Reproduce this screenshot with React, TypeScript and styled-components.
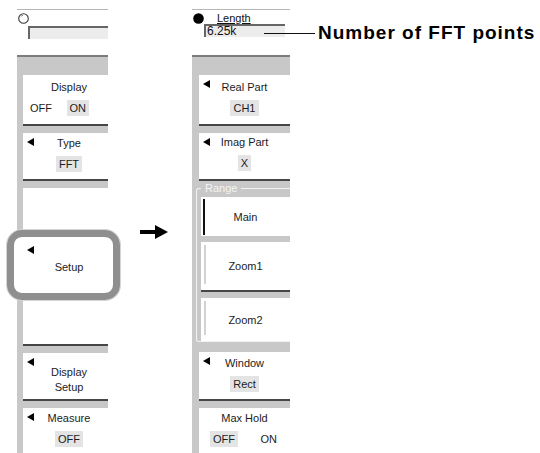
import React from "react";
import styled, { createGlobalStyle } from "styled-components";

const Global = createGlobalStyle`
  html, body { margin: 0; padding: 0; background: #fff; overflow: hidden; }
  body { font-family: "Liberation Sans", Arial, sans-serif; }
`;

const Page = styled.div`
  display: flex;
  align-items: flex-start;
  height: 453px;
  box-sizing: border-box;
  padding: 9px 0 0 17px;
  overflow: hidden;
`;

const Panel = styled.div<{ $w: number; $ml?: number }>`
  width: ${(p) => p.$w}px;
  margin-left: ${(p) => p.$ml ?? 0}px;
  display: flex;
  flex-direction: column;
  height: 448px;
`;

const Head = styled.div`
  position: relative;
  height: 46px;
  flex: none;
  box-sizing: border-box;
  border-top: 1px solid #b6b6b6;
  background: #fff;
  padding: 2px 0 0 1px;
`;

const HeadRow = styled.div`
  display: flex;
  align-items: center;
  height: 12px;
`;

const HeadLabel = styled.span`
  margin-left: 13px;
  font-size: 11px;
  line-height: 11px;
  color: #111;
  text-decoration: underline;
`;

const ValueBox = styled.div<{ $ml: number; $mt: number; $w: number }>`
  margin: ${(p) => p.$mt}px 0 0 ${(p) => p.$ml}px;
  width: ${(p) => p.$w}px;
  height: 13px;
  box-sizing: border-box;
  background: #ececec;
  border-top: 2px solid #666;
  border-left: 2px solid #666;
  font-size: 12px;
  line-height: 11px;
  padding-left: 1px;
  color: #111;
`;

const Band = styled.div`
  height: 20px;
  flex: none;
  box-sizing: border-box;
  border-top: 2px solid #7c7c7c;
  background: #c8c8c8;
`;

const KeyStack = styled.div<{ $strip: number }>`
  flex: 1;
  background: #c8c8c8;
  padding-left: ${(p) => p.$strip}px;
  display: flex;
  flex-direction: column;
  gap: 7px;
`;

const Key = styled.div<{ $h: number; $pt?: number; $pl?: number; $extend?: number }>`
  position: relative;
  height: ${(p) => p.$h}px;
  flex: none;
  box-sizing: border-box;
  background: #fff;
  border-bottom: 2px solid #464646;
  margin-left: ${(p) => -(p.$extend ?? 0)}px;
  padding: ${(p) => p.$pt ?? 4}px 0 0 ${(p) => (p.$pl ?? 0) + (p.$extend ?? 0)}px;
  display: flex;
  flex-direction: column;
  align-items: center;
  font-size: 11px;
  color: #1c1c1c;
`;

const Marker = styled.span<{ $left?: number }>`
  position: absolute;
  left: ${(p) => p.$left ?? 4}px;
  top: 5px;
  width: 0;
  height: 0;
  border-top: 4px solid transparent;
  border-bottom: 4px solid transparent;
  border-right: 7px solid #000;
`;

const Label = styled.span<{ $lh?: number }>`
  line-height: ${(p) => p.$lh ?? 14}px;
  text-align: center;
  white-space: nowrap;
`;

const Value = styled.span`
  margin-top: 6px;
  line-height: 16px;
  padding: 0 3px;
  background: #e4e4e4;
`;

const Toggle = styled.div<{ $m: string }>`
  align-self: stretch;
  display: flex;
  justify-content: space-between;
  margin: ${(p) => p.$m};
`;

const Option = styled.span<{ $on?: boolean }>`
  line-height: 16px;
  padding: 0 3px;
  background: ${(p) => (p.$on ? "#e4e4e4" : "transparent")};
`;

const Ring = styled.div`
  position: absolute;
  top: -11px;
  bottom: -11px;
  left: -10px;
  right: -12px;
  border: 7px solid #8f8f8f;
  border-radius: 15px;
  box-shadow: inset 0 0 0 4px #fff, 0 0 0 1px #d4d4d4;
  z-index: 2;
  pointer-events: none;
`;

const RangeSet = styled.fieldset`
  margin: -6px 0 3px -3px;
  padding: 3px 0 0 4px;
  border: 1px solid #f2f2f2;
  border-right: none;
  border-radius: 3px 0 0 3px;
  min-width: 0;
`;

const RangeLegend = styled.legend`
  font-size: 11px;
  line-height: 12px;
  color: #f4f4f4;
  padding: 0 4px;
`;

const RangeList = styled.div`
  display: flex;
  flex-direction: column;
  gap: 6px;
`;

const RangeKey = styled.div<{ $h: number; $sel?: boolean; $line?: boolean }>`
  position: relative;
  height: ${(p) => p.$h}px;
  box-sizing: border-box;
  background: #fff;
  border-bottom: ${(p) => (p.$line ? "2px solid #464646" : "none")};
  display: flex;
  align-items: center;
  justify-content: center;
  font-size: 11px;
  color: #1c1c1c;
  &::before {
    content: "";
    position: absolute;
    left: ${(p) => (p.$sel ? 2 : 3)}px;
    top: ${(p) => (p.$sel ? 2 : 3)}px;
    bottom: ${(p) => (p.$sel ? 1 : 6)}px;
    width: 2px;
    background: ${(p) => (p.$sel ? "#111" : "#d2d2d2")};
  }
`;

const ArrowBox = styled.svg`
  flex: none;
  margin: 216px 0 0 32px;
`;

const Callout = styled.div`
  position: absolute;
  left: 72px;
  top: 12px;
  height: 22px;
  display: flex;
  align-items: center;
`;

const Leader = styled.span`
  width: 51px;
  height: 1px;
  background: #111;
`;

const CalloutText = styled.span`
  margin-left: 3px;
  font-family: "Liberation Sans", Arial, sans-serif;
  font-weight: bold;
  font-size: 19px;
  letter-spacing: 1px;
  line-height: 22px;
  color: #000;
  white-space: nowrap;
`;

const Knob = ({ filled }: { filled?: boolean }) => (
  <svg width="11" height="11" viewBox="0 0 11 11">
    {filled ? (
      <circle cx="5.5" cy="5.5" r="5.3" fill="#000" />
    ) : (
      <>
        <circle cx="5.5" cy="5.5" r="4.8" fill="#fff" stroke="#3a3a3a" strokeWidth="1.1" />
        <path d="M2.8 3.6 A3.2 3.2 0 0 1 5 2.3" stroke="#777" strokeWidth="0.9" fill="none" />
      </>
    )}
  </svg>
);

export default function App() {
  return (
    <>
      <Global />
      <Page>
        <Panel $w={91}>
          <Head>
            <HeadRow>
              <Knob />
            </HeadRow>
            <ValueBox $ml={10} $mt={2} $w={80} />
          </Head>
          <Band />
          <KeyStack $strip={6}>
            <Key $h={51} $pt={5} $pl={7}>
              <Label>Display</Label>
              <Toggle $m="6px 19px 0 -3px">
                <Option>OFF</Option>
                <Option $on>ON</Option>
              </Toggle>
            </Key>
            <Key $h={48} $pt={3} $pl={7}>
              <Marker />
              <Label>Type</Label>
              <Value>FFT</Value>
            </Key>
            <Key $h={46} $pl={7} />
            <Key $h={50} $pt={19} $pl={7} $extend={6}>
              <Marker $left={10} />
              <Label>Setup</Label>
              <Ring />
            </Key>
            <Key $h={48} $pl={7} />
            <Key $h={48} $pt={12} $pl={7}>
              <Marker />
              <Label $lh={15}>Display</Label>
              <Label $lh={15}>Setup</Label>
            </Key>
            <Key $h={49} $pt={3} $pl={7}>
              <Marker />
              <Label>Measure</Label>
              <Value>OFF</Value>
            </Key>
          </KeyStack>
        </Panel>

        <ArrowBox width="28" height="14" viewBox="0 0 28 14">
          <rect x="0" y="5" width="17" height="4" fill="#000" />
          <polygon points="15,0 28,7 15,14" fill="#000" />
        </ArrowBox>

        <Panel $w={98} $ml={24}>
          <Head>
            <HeadRow>
              <Knob filled />
              <HeadLabel>Length</HeadLabel>
            </HeadRow>
            <ValueBox $ml={11} $mt={0} $w={81}>6.25k</ValueBox>
            <Callout>
              <Leader />
              <CalloutText>Number of FFT points</CalloutText>
            </Callout>
          </Head>
          <Band />
          <KeyStack $strip={7}>
            <Key $h={51} $pt={5}>
              <Marker />
              <Label>Real Part</Label>
              <Value>CH1</Value>
            </Key>
            <Key $h={48} $pt={2}>
              <Marker />
              <Label>Imag Part</Label>
              <Value>X</Value>
            </Key>
            <RangeSet>
              <RangeLegend>Range</RangeLegend>
              <RangeList>
                <RangeKey $h={39} $sel>Main</RangeKey>
                <RangeKey $h={50} $line>Zoom1</RangeKey>
                <RangeKey $h={43}>Zoom2</RangeKey>
              </RangeList>
            </RangeSet>
            <Key $h={49} $pt={4}>
              <Marker />
              <Label>Window</Label>
              <Value>Rect</Value>
            </Key>
            <Key $h={49} $pt={3}>
              <Label>Max Hold</Label>
              <Toggle $m="6px 10px 0 11px">
                <Option $on>OFF</Option>
                <Option>ON</Option>
              </Toggle>
            </Key>
          </KeyStack>
        </Panel>
      </Page>
    </>
  );
}
